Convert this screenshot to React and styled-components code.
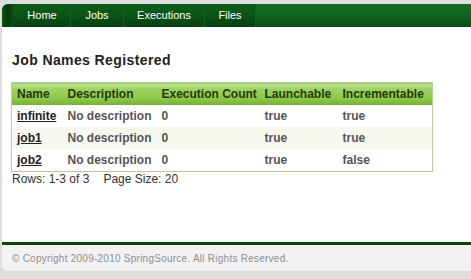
import React from "react";
import styled, { createGlobalStyle } from "styled-components";

const GlobalStyle = createGlobalStyle`
  html, body { margin: 0; padding: 0; background: #dedede; }
  body { font-family: "Liberation Sans", Arial, sans-serif; }
`;

const Page = styled.div`
  padding: 4px 0 8px 2px;
`;

const Shell = styled.div`
  background: #ffffff;
  border-radius: 6px 0 0 6px;
  overflow: hidden;
`;

const Nav = styled.nav`
  display: flex;
  height: 23px;
  background: linear-gradient(#12701f, #0e6420 50%, #0a4d15);
  border-radius: 6px 0 0 0;
`;

const NavCap = styled.div`
  width: 12px;
  background: linear-gradient(90deg, #0b5a18 0px, #063e0d 3px, #053a0c 6px, #0a5117 12px);
`;

const Tab = styled.a`
  display: flex;
  align-items: center;
  justify-content: center;
  width: ${(p) => p.$w}px;
  color: #ffffff;
  font-size: 11px;
  text-decoration: none;
  background: linear-gradient(#0c5d1b, #0a5418 50%, #073f10);
  border-right: 1px solid #13622a;
  box-sizing: border-box;
  padding-bottom: 1px;
`;

const Main = styled.main`
  padding: 25px 0 0 10px;
  height: 190px;
`;

const Title = styled.h2`
  margin: 0 0 14px 0;
  font-size: 14px;
  line-height: 16px;
  font-weight: bold;
  color: #222222;
  letter-spacing: 0.4px;
`;

const Table = styled.table`
  border-collapse: collapse;
  table-layout: fixed;
  width: 421px;
  margin-left: -1px;
  border: 1px solid #bccaa0;
  font-size: 12px;
`;

const Col = styled.col`
  width: ${(p) => p.$w}px;
`;

const Th = styled.th`
  height: 22px;
  padding: 0 5px;
  text-align: left;
  font-weight: bold;
  color: #223a0c;
  white-space: nowrap;
  background: linear-gradient(#c6e6a0 0%, #9fd262 25%, #8cc64a 70%, #74b035 100%);
`;

const Row = styled.tr`
  background: ${(p) => (p.$alt ? "#f6f7ef" : "#ffffff")};
`;

const Td = styled.td`
  height: 22px;
  padding: 0 5px;
  font-weight: bold;
  color: #555555;
  white-space: nowrap;
`;

const JobLink = styled.a`
  color: #222222;
  text-decoration: underline;
`;

const Pager = styled.div`
  font-size: 12px;
  line-height: 14px;
  color: #333333;
  margin-top: 0;
`;

const Gap = styled.span`
  display: inline-block;
  width: 14px;
`;

const Footer = styled.footer`
  border-top: 3px solid #0b470e;
  background: #f2f2f3;
  height: 26px;
  display: flex;
  align-items: center;
  padding-left: 10px;
  font-size: 10px;
  letter-spacing: 0.25px;
  color: #8e8e8e;
  border-radius: 0 0 0 6px;
`;

const jobs = [
  { name: "infinite", desc: "No description", count: 0, launch: "true", inc: "true" },
  { name: "job1", desc: "No description", count: 0, launch: "true", inc: "true" },
  { name: "job2", desc: "No description", count: 0, launch: "true", inc: "false" },
];

export default function App() {
  return (
    <>
      <GlobalStyle />
      <Page>
        <Shell>
          <Nav>
            <NavCap />
            <Tab $w={57} href="#">Home</Tab>
            <Tab $w={53} href="#">Jobs</Tab>
            <Tab $w={81} href="#">Executions</Tab>
            <Tab $w={51} href="#">Files</Tab>
          </Nav>
          <Main>
            <Title>Job Names Registered</Title>
            <Table>
              <colgroup>
                <Col $w={51} />
                <Col $w={94} />
                <Col $w={103} />
                <Col $w={78} />
                <Col $w={95} />
              </colgroup>
              <thead>
                <tr>
                  <Th>Name</Th>
                  <Th>Description</Th>
                  <Th>Execution Count</Th>
                  <Th>Launchable</Th>
                  <Th>Incrementable</Th>
                </tr>
              </thead>
              <tbody>
                {jobs.map((j, i) => (
                  <Row key={j.name} $alt={i % 2 === 1}>
                    <Td>
                      <JobLink href="#">{j.name}</JobLink>
                    </Td>
                    <Td>{j.desc}</Td>
                    <Td>{j.count}</Td>
                    <Td>{j.launch}</Td>
                    <Td>{j.inc}</Td>
                  </Row>
                ))}
              </tbody>
            </Table>
            <Pager>
              Rows: 1-3 of 3<Gap />Page Size: 20
            </Pager>
          </Main>
          <Footer>© Copyright 2009-2010 SpringSource. All Rights Reserved.</Footer>
        </Shell>
      </Page>
    </>
  );
}
